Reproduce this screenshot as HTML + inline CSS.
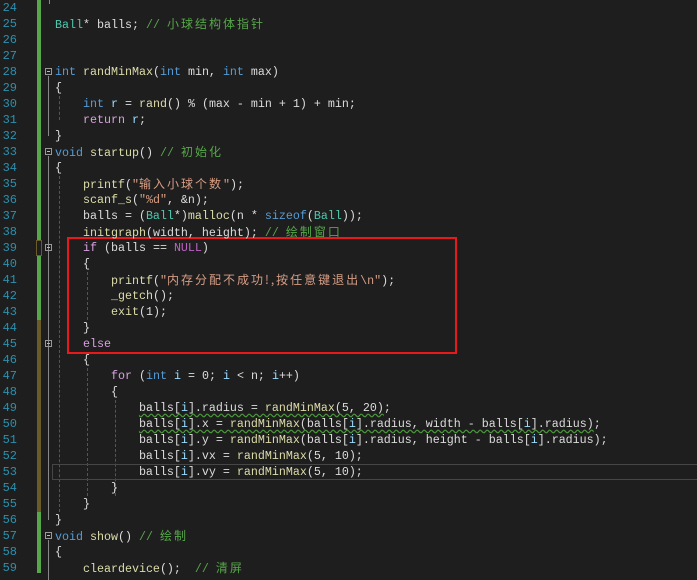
<!DOCTYPE html><html><head><meta charset="utf-8"><style>
body{margin:0;width:697px;height:573px;background:#1e1e1e;overflow:hidden;position:relative;font-family:"Liberation Mono","Noto Sans CJK SC",monospace;font-size:11.67px;color:#dcdcdc}
.l{position:absolute;left:55px;height:16px;line-height:16px;white-space:pre}
.n{position:absolute;left:0;width:17px;text-align:right;color:#2b91af;height:16px;line-height:16px;font-size:12px}
.k{color:#569cd6}.t{color:#4ec9b0}.f{color:#dcdcaa}.c{color:#57a64a}.s{color:#d69d85}.p{color:#d8a0df}.v{color:#9cdcfe}.m{color:#bd63c5}
.z{font-family:"Noto Sans CJK SC",sans-serif;font-size:12px;letter-spacing:2px}
.bar{position:absolute;left:37px;width:4px}
.fb{position:absolute;left:45px;width:7px;height:7px;border:1px solid #999;box-sizing:border-box}
.fb:after{content:"";position:absolute;left:1px;top:2px;width:3px;height:1px;background:#bbb}
.vl{position:absolute;width:1px;background:#888}
.g{position:absolute;width:0;border-left:1px dashed #555}
.u{text-decoration:underline wavy #4a9a3a;text-underline-offset:2px}
</style></head><body>
<div class="bar" style="top:0;height:240px;background:#57a64a"></div>
<div class="bar" style="top:240px;height:16px;border:1px solid #6b5b29;box-sizing:border-box;left:36px;width:6px"></div>
<div class="bar" style="top:256px;height:64px;background:#57a64a"></div>
<div class="bar" style="top:320px;height:192px;background:#6b5b29"></div>
<div class="bar" style="top:512px;height:61px;background:#57a64a"></div>
<div class="vl" style="left:49px;top:0;height:4px"></div>
<div class="fb" style="top:68px"></div><div class="vl" style="left:48px;top:76px;height:60px"></div>
<div class="fb" style="top:148px"></div><div class="vl" style="left:48px;top:156px;height:364px"></div>
<div class="fb" style="top:244px"></div><div class="fb" style="top:340px"></div>
<div class="fb" style="top:532px"></div><div class="vl" style="left:48px;top:540px;height:40px"></div>
<div class="g" style="left:59px;top:96px;height:24px"></div>
<div class="g" style="left:59px;top:176px;height:336px"></div>
<div class="g" style="left:87px;top:272px;height:48px"></div>
<div class="g" style="left:87px;top:368px;height:128px"></div>
<div class="g" style="left:115px;top:400px;height:96px"></div>
<div style="position:absolute;left:52px;top:464px;width:650px;height:16px;border:1px solid #464646;box-sizing:border-box"></div>
<div style="position:absolute;left:67px;top:237px;width:390px;height:117px;border:2px solid #e8191a;box-sizing:border-box"></div>
<div class="n" style="top:0">24</div><div class="n" style="top:16px">25</div><div class="n" style="top:32px">26</div><div class="n" style="top:48px">27</div><div class="n" style="top:64px">28</div><div class="n" style="top:80px">29</div><div class="n" style="top:96px">30</div><div class="n" style="top:112px">31</div><div class="n" style="top:128px">32</div><div class="n" style="top:144px">33</div><div class="n" style="top:160px">34</div><div class="n" style="top:176px">35</div><div class="n" style="top:192px">36</div><div class="n" style="top:208px">37</div><div class="n" style="top:224px">38</div><div class="n" style="top:240px">39</div><div class="n" style="top:256px">40</div><div class="n" style="top:272px">41</div><div class="n" style="top:288px">42</div><div class="n" style="top:304px">43</div><div class="n" style="top:320px">44</div><div class="n" style="top:336px">45</div><div class="n" style="top:352px">46</div><div class="n" style="top:368px">47</div><div class="n" style="top:384px">48</div><div class="n" style="top:400px">49</div><div class="n" style="top:416px">50</div><div class="n" style="top:432px">51</div><div class="n" style="top:448px">52</div><div class="n" style="top:464px">53</div><div class="n" style="top:480px">54</div><div class="n" style="top:496px">55</div><div class="n" style="top:512px">56</div><div class="n" style="top:528px">57</div><div class="n" style="top:544px">58</div><div class="n" style="top:560px">59</div>
<div class="l" style="top:16px"><span class="t">Ball</span>* balls; <span class="c">// <span class="z">小球结构体指针</span></span></div>
<div class="l" style="top:64px"><span class="k">int</span> <span class="f">randMinMax</span>(<span class="k">int</span> min, <span class="k">int</span> max)</div>
<div class="l" style="top:80px">{</div>
<div class="l" style="top:96px">    <span class="k">int</span> <span class="v">r</span> = <span class="f">rand</span>() % (max - min + 1) + min;</div>
<div class="l" style="top:112px">    <span class="p">return</span> <span class="v">r</span>;</div>
<div class="l" style="top:128px">}</div>
<div class="l" style="top:144px"><span class="k">void</span> <span class="f">startup</span>() <span class="c">// <span class="z">初始化</span></span></div>
<div class="l" style="top:160px">{</div>
<div class="l" style="top:176px">    <span class="f">printf</span>(<span class="s">"<span class="z">输入小球个数</span>"</span>);</div>
<div class="l" style="top:192px">    <span class="f">scanf_s</span>(<span class="s">"%d"</span>, &amp;n);</div>
<div class="l" style="top:208px">    balls = (<span class="t">Ball</span>*)<span class="f">malloc</span>(n * <span class="k">sizeof</span>(<span class="t">Ball</span>));</div>
<div class="l" style="top:224px">    <span class="f">initgraph</span>(width, height); <span class="c">// <span class="z">绘制窗口</span></span></div>
<div class="l" style="top:240px">    <span class="p">if</span> (balls == <span class="m">NULL</span>)</div>
<div class="l" style="top:256px">    {</div>
<div class="l" style="top:272px">        <span class="f">printf</span>(<span class="s">"<span class="z">内存分配不成功!,按任意键退出</span>\n"</span>);</div>
<div class="l" style="top:288px">        <span class="f">_getch</span>();</div>
<div class="l" style="top:304px">        <span class="f">exit</span>(1);</div>
<div class="l" style="top:320px">    }</div>
<div class="l" style="top:336px">    <span class="p">else</span></div>
<div class="l" style="top:352px">    {</div>
<div class="l" style="top:368px">        <span class="p">for</span> (<span class="k">int</span> <span class="v">i</span> = 0; <span class="v">i</span> &lt; n; <span class="v">i</span>++)</div>
<div class="l" style="top:384px">        {</div>
<div class="l" style="top:400px">            <span class="u">balls[<span class="v">i</span>].radius = <span class="f">randMinMax</span>(5, 20)</span>;</div>
<div class="l" style="top:416px">            <span class="u">balls[<span class="v">i</span>].x = <span class="f">randMinMax</span>(balls[<span class="v">i</span>].radius, width - balls[<span class="v">i</span>].radius)</span>;</div>
<div class="l" style="top:432px">            balls[<span class="v">i</span>].y = <span class="f">randMinMax</span>(balls[<span class="v">i</span>].radius, height - balls[<span class="v">i</span>].radius);</div>
<div class="l" style="top:448px">            balls[<span class="v">i</span>].vx = <span class="f">randMinMax</span>(5, 10);</div>
<div class="l" style="top:464px">            balls[<span class="v">i</span>].vy = <span class="f">randMinMax</span>(5, 10);</div>
<div class="l" style="top:480px">        }</div>
<div class="l" style="top:496px">    }</div>
<div class="l" style="top:512px">}</div>
<div class="l" style="top:528px"><span class="k">void</span> <span class="f">show</span>() <span class="c">// <span class="z">绘制</span></span></div>
<div class="l" style="top:544px">{</div>
<div class="l" style="top:560px">    <span class="f">cleardevice</span>();  <span class="c">// <span class="z">清屏</span></span></div>
</body></html>
